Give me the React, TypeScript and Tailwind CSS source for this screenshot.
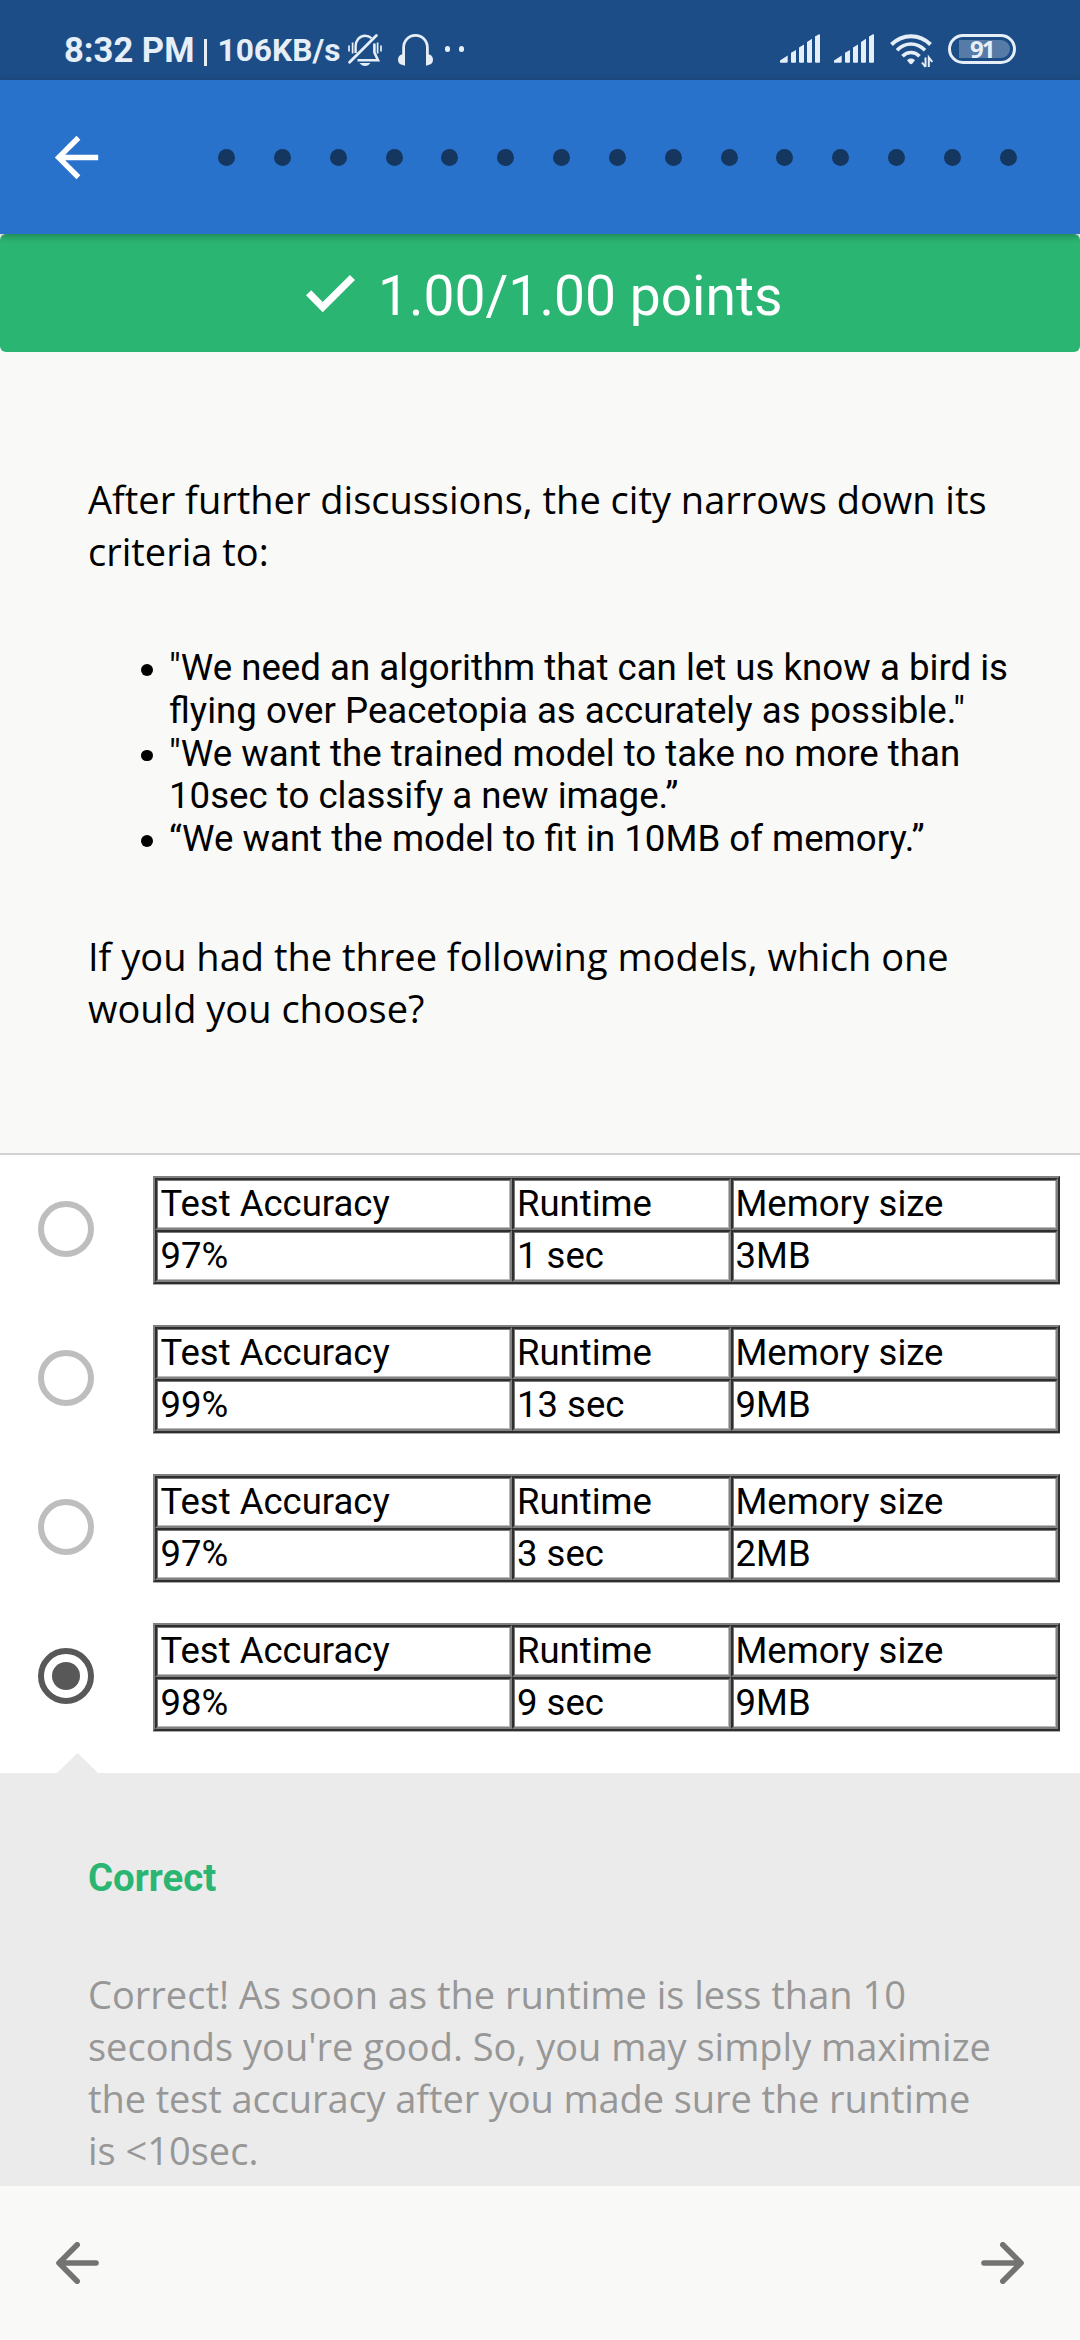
import React from "react";

const options = [
  { accuracy: "97%", runtime: "1 sec", memory: "3MB", selected: false },
  { accuracy: "99%", runtime: "13 sec", memory: "9MB", selected: false },
  { accuracy: "97%", runtime: "3 sec", memory: "2MB", selected: false },
  { accuracy: "98%", runtime: "9 sec", memory: "9MB", selected: true },
];

const criteria = [
  ['"We need an algorithm that can let us know a bird is', 'flying over Peacetopia as accurately as possible."'],
  ['"We want the trained model to take no more than', "10sec to classify a new image.”"],
  ["“We want the model to fit in 10MB of memory.”"],
];

function BellOffIcon() {
  return (
    <svg className="h-[32px] w-[34px]" viewBox="0 0 34 32" fill="none" stroke="currentColor">
      <path d="M7.6 19V12.5C7.6 6.5 11.5 1.8 17 1.8c2.6 0 4.800 0.9 6.4 2.400" strokeWidth="2.400" />
      <path d="M26.400 9.500V18.500l3.600 7.800H9.500" strokeWidth="2.600" />
      <path d="M1.600 28.200 28.400 1.600" strokeWidth="2.800" strokeLinecap="round" />
      <path d="M1 11.500v6M4.600 8.500v11M29.600 8.500v11M33 11.500v6" strokeWidth="1.700" />
      <path d="M11.500 29h11c-1.600 2-3.300 3-5.500 3s-3.900-1-5.500-3z" fill="currentColor" stroke="none" />
    </svg>
  );
}

function HeadphonesIcon() {
  return (
    <svg className="h-[32px] w-[35px]" viewBox="0 0 35 32" fill="none" stroke="currentColor">
      <path d="M5.600 24V14C5.600 6.500 10.800 1.400 17.500 1.400S29.400 6.500 29.400 14V24" strokeWidth="2.800" />
      <path d="M7 20.500H3.500C1.300 21.300 0 23.300 0 25.700s1.300 4.200 3.200 4.800L7 31.800z" fill="currentColor" stroke="none" />
      <path d="M28 20.500h3.500c2.200 0.800 3.500 2.800 3.500 5.200s-1.300 4.200-3.200 4.800L28 31.800z" fill="currentColor" stroke="none" />
    </svg>
  );
}

function SignalIcon() {
  return (
    <svg className="h-[29px] w-[40px]" viewBox="0 0 40 29" fill="currentColor">
      <path d="M0 28.500v-2L7.700 21.500v6a1.200 1.200 0 0 1-1.200 1.200H0.500z" />
      <path d="M11 18.800 16 16v11.800a1 1 0 0 1-1 1h-3a1 1 0 0 1-1-1z" />
      <path d="M19 13.500 24 10.500v17.300a1 1 0 0 1-1 1h-3a1 1 0 0 1-1-1z" />
      <path d="M27 8 32 4.800v23a1 1 0 0 1-1 1h-3a1 1 0 0 1-1-1z" />
      <path d="M35 2.500 39 0.200 40 0.500v27.300a1 1 0 0 1-1 1h-3a1 1 0 0 1-1-1z" />
    </svg>
  );
}

function WifiIcon() {
  return (
    <svg className="h-[34px] w-[43px]" viewBox="0 0 43 34" fill="none" stroke="currentColor">
      <path d="M1.500 10.500C12.500-0.600 29.500-0.600 40.500 10.500" strokeWidth="4" />
      <path d="M7 16.200C15.200 8 26.800 8 35 16.200" strokeWidth="3.600" />
      <path d="M12.500 22.200C17.400 17.200 24.600 17.200 29.500 22.200" strokeWidth="3.600" />
      <path d="M17 26.200c2-2.200 6-2.200 8 0l-2.600 3.300q-1.400 1.300-2.800 0z" fill="currentColor" stroke="none" />
      <path d="M35.500 23.500V33M35.500 33l-3.500-4.500M38.800 33V23.500l3.500 4.500" strokeWidth="2" />
    </svg>
  );
}

function StatusBar() {
  return (
    <div className="flex h-[80px] items-start bg-[#1d4d86] pl-[64px] pr-[64px] text-[#e6eef8]">
      <span className="mt-[30px] w-[139px] whitespace-nowrap text-[34.6px] leading-[40px] font-bold">8:32 PM</span>
      <span className="mt-[39px] ml-[1px] h-[27px] w-[3px] bg-current" />
      <span className="mt-[31px] ml-[10.500px] w-[130.500px] whitespace-nowrap text-[31.7px] leading-[40px] font-bold">106KB/s</span>
      <div className="mt-[34px] flex">
        <BellOffIcon />
        <div className="ml-[16px]">
          <HeadphonesIcon />
        </div>
        <div className="mt-[12px] ml-[12px] flex gap-[9px]">
          <span className="h-[6px] w-[5px] rounded-full bg-current" />
          <span className="h-[6px] w-[5px] rounded-full bg-current" />
        </div>
      </div>
      <div className="mt-[34px] ml-auto flex items-start">
        <SignalIcon />
        <div className="ml-[14px]">
          <SignalIcon />
        </div>
        <div className="ml-[16px]">
          <WifiIcon />
        </div>
        <div className="ml-[15px] flex h-[30px] w-[68px] items-center justify-end rounded-full border-[3px] border-current pr-[3px]">
          <div className="flex h-[18px] w-[51px] items-center rounded-r-[9px] bg-[#557ba6] pl-[11px] font-['Open_Sans',sans-serif] text-[24px] leading-[18px] font-bold tracking-[-2px]">
            91
          </div>
        </div>
      </div>
    </div>
  );
}

function Header() {
  return (
    <header className="relative z-10 flex h-[154px] items-center bg-[#2972cc] pr-[63px] pl-[44px] shadow-[0_2px_8px_rgba(0,0,0,0.3)]">
      <svg className="h-[65px] w-[65px] text-white" viewBox="0 0 24 24" fill="currentColor">
        <path d="M20 11H7.830l5.590-5.590L12 4l-8 8 8 8 1.410-1.410L7.830 13H20v-2z" />
      </svg>
      <div className="ml-[109px] flex flex-1 justify-between">
        {Array.from({ length: 15 }, (_, i) => (
          <span key={i} className="h-[17px] w-[17px] rounded-full bg-[#14365f]" />
        ))}
      </div>
    </header>
  );
}

function ScoreBanner() {
  return (
    <div className="flex h-[118px] items-start rounded-[6px] bg-[#2bb572] pl-[306px] text-white">
      <svg className="mt-[41px] h-[38px] w-[49px]" viewBox="0 0 49 38" fill="currentColor">
        <path d="M0 20.300 5.200 15.300 16.700 27 43.900 0 49 5 16.700 37.300z" />
      </svg>
      <span className="mt-[30px] ml-[23px] text-[55.2px] leading-[64px]">1.00/1.00 points</span>
    </div>
  );
}

function Question() {
  return (
    <section className="h-[803px] border-b-2 border-[#d2d2d2] pt-[120.500px] pl-[88px] text-black">
      <p className="font-['Open_Sans',sans-serif] text-[38px] leading-[52px]">
        After further discussions, the city narrows down its
        <br />
        criteria to:
      </p>
      <ul className="mt-[70.500px] pl-[53px]">
        {criteria.map((lines, i) => (
          <li key={i} className="flex text-[36.65px] leading-[42.75px]">
            <span className="mt-[17px] h-[11.500px] w-[11.500px] rounded-full bg-black" />
            <span className="ml-[16.500px] whitespace-nowrap">
              {lines.map((line, j) => (
                <span key={j} className="block">
                  {line}
                </span>
              ))}
            </span>
          </li>
        ))}
      </ul>
      <p className="mt-[69px] font-['Open_Sans',sans-serif] text-[38px] leading-[52px]">
        If you had the three following models, which one
        <br />
        would you choose?
      </p>
    </section>
  );
}

function Cell({ children, pad }: { children: React.ReactNode; pad: string }) {
  return (
    <div
      className={
        "border-2 border-t-[#2e2e2e] border-r-[#808080] border-b-[#808080] border-l-[#2e2e2e] leading-[47px] shadow-[inset_1px_1px_0_#777777,inset_-1px_-1px_0_#bbbbbb] " +
        pad
      }
    >
      {children}
    </div>
  );
}

function Option({ option }: { option: (typeof options)[number] }) {
  return (
    <div className="flex h-[149px] items-start pt-[21px] pl-[38px]">
      {option.selected ? (
        <span className="mt-[25px] flex h-[56px] w-[56px] items-center justify-center rounded-full border-[6px] border-[#585858]">
          <span className="h-[28px] w-[28px] rounded-full bg-[#585858]" />
        </span>
      ) : (
        <span className="mt-[25px] h-[56px] w-[56px] rounded-full border-[6px] border-[#bebebe]" />
      )}
      <div className="ml-[59px] grid grid-cols-[357px_219px_327px] grid-rows-[52px_52px] border-2 border-t-[#808080] border-r-[#2e2e2e] border-b-[#2e2e2e] border-l-[#808080] text-[36.5px] text-black shadow-[0_1px_0_#aaaaaa]">
        <Cell pad="pl-[3.500px]">Test Accuracy</Cell>
        <Cell pad="pl-[3px]">Runtime</Cell>
        <Cell pad="pl-[2.500px]">Memory size</Cell>
        <Cell pad="pl-[3.500px]">{option.accuracy}</Cell>
        <Cell pad="pl-[3px]">{option.runtime}</Cell>
        <Cell pad="pl-[2.500px]">{option.memory}</Cell>
      </div>
    </div>
  );
}

function Feedback() {
  return (
    <section className="h-[413px] bg-[#ebebeb] pt-[83px] pl-[88px]">
      <h2 className="text-[38.4px] leading-[44px] font-bold text-[#2bb572]">Correct</h2>
      <p className="mt-[68px] font-['Open_Sans',sans-serif] text-[38px] leading-[52px] text-[#979797]">
        Correct! As soon as the runtime is less than 10
        <br />
        seconds you're good. So, you may simply maximize
        <br />
        <span className="tracking-[-0.1px]">the test accuracy after you made sure the runtime</span>
        <br />
        is &lt;10sec.
      </p>
    </section>
  );
}

function FooterArrow({ flip = false }: { flip?: boolean }) {
  return (
    <svg
      className={flip ? "h-[42px] w-[43px] -scale-x-100" : "h-[42px] w-[43px]"}
      viewBox="0 0 43 42"
      fill="none"
      stroke="#737371"
      strokeWidth="5.600"
      strokeLinecap="round"
      strokeLinejoin="round"
    >
      <path d="M40 21H3.500M21.200 2.800 3 21l18.200 18.200" />
    </svg>
  );
}

export default function App() {
  return (
    <div className="flex h-[2340px] w-[1080px] flex-col overflow-hidden bg-[#f9f9f7] font-[Roboto,sans-serif]">
      <StatusBar />
      <Header />
      <ScoreBanner />
      <Question />
      <section className="flex h-[618px] flex-col bg-white">
        {options.map((option, i) => (
          <Option key={i} option={option} />
        ))}
        <svg className="mt-auto ml-[56.500px] h-[20px] w-[41px]" viewBox="0 0 41 20" fill="#ebebeb">
          <path d="M20.500 0 41 20H0z" />
        </svg>
      </section>
      <Feedback />
      <footer className="flex h-[154px] items-center justify-between bg-[#f9f9f7] px-[56px]">
        <FooterArrow />
        <FooterArrow flip />
      </footer>
    </div>
  );
}
